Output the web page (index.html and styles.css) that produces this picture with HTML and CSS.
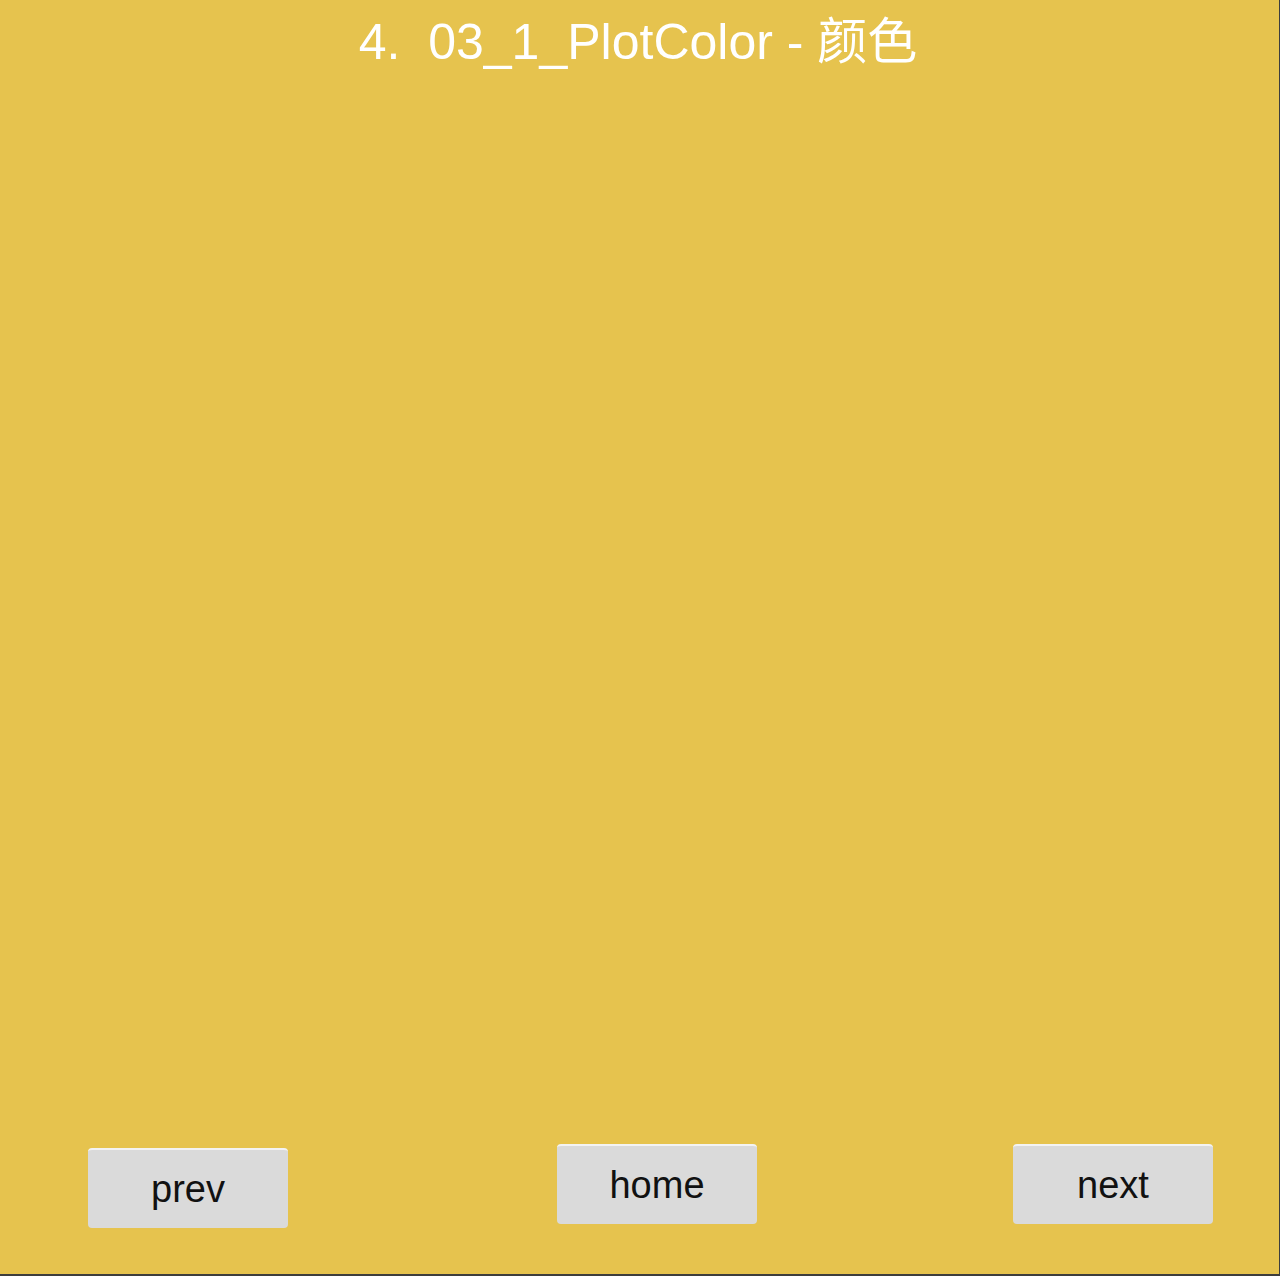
FILE: index.html
```html
<!DOCTYPE html>
<html lang="zh">
<head>
<meta charset="utf-8">
<title>03_1_PlotColor</title>
<link rel="stylesheet" href="styles.css">
</head>
<body>
<div class="screen">
  <h1 class="title">4.&nbsp;&nbsp;03_1_PlotColor - 颜色</h1>
  <div class="stage"></div>
  <div class="nav">
    <button class="btn btn-prev">prev</button>
    <button class="btn btn-home">home</button>
    <button class="btn btn-next">next</button>
  </div>
</div>
</body>
</html>
```

FILE: styles.css
```css
html, body {
  margin: 0;
  padding: 0;
  background: #3d3d3d;
}

.screen {
  box-sizing: border-box;
  width: 1280px;
  height: 1276px;
  background: #e6c34e;
  border-bottom: 2px solid #3d3d3d;
  border-right: 1px solid #3d3d3d;
  display: flex;
  flex-direction: column;
  font-family: "Liberation Sans", "Noto Sans CJK SC", sans-serif;
}

.title {
  margin: 0;
  padding-top: 13px;
  font-size: 50px;
  line-height: 58px;
  font-weight: normal;
  color: #ffffff;
  text-align: center;
  padding-right: 3px;
}

.stage {
  flex: 1;
}

.nav {
  display: flex;
  align-items: flex-start;
  padding-left: 88px;
  padding-bottom: 46px;
}

.btn {
  box-sizing: border-box;
  width: 200px;
  height: 80px;
  padding: 0;
  margin: 0;
  border: none;
  border-top: 2px solid #f3f3f3;
  border-radius: 4px;
  background: #dadada;
  color: #111111;
  font-family: "Liberation Sans", sans-serif;
  font-size: 38px;
  line-height: 76px;
  text-align: center;
}

.btn-prev {
  margin-top: 4px;
}

.btn-home {
  margin-left: 269px;
}

.btn-next {
  margin-left: 256px;
}
```
